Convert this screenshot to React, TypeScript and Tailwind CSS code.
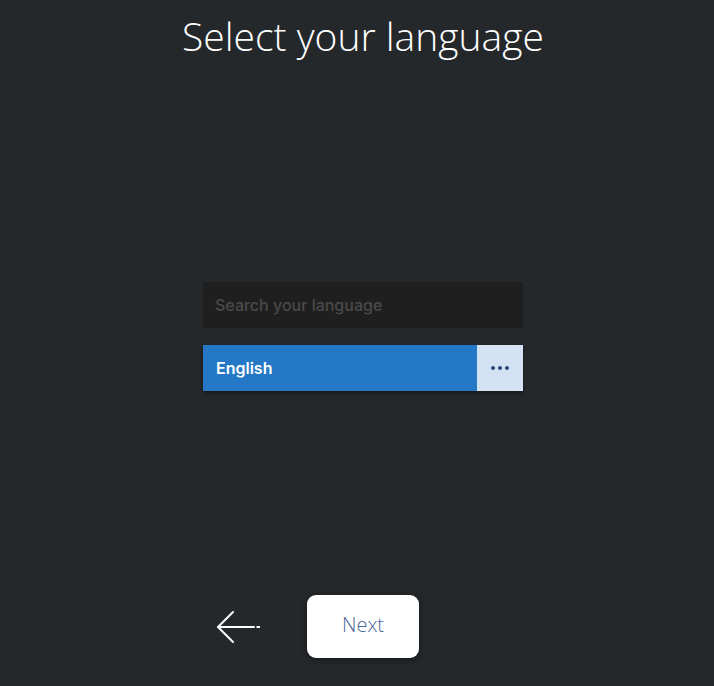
import React from "react";

const ArrowLeft = () => (
  <svg width="48" height="34" viewBox="0 0 48 34" fill="none" className="block">
    <path d="M17 2 L2 17 L17 32" stroke="#ffffff" strokeWidth="2" strokeLinecap="round" strokeLinejoin="round" />
    <path d="M2 17 H38" stroke="#ffffff" strokeWidth="2" strokeLinecap="round" />
    <path d="M40.5 17 H44" stroke="#ffffff" strokeWidth="2" />
  </svg>
);

const App = () => {
  return (
    <div className="flex h-[686px] w-full flex-col items-center bg-[#25282b] pl-[12px] font-['Inter',Arial,sans-serif]">
      <h1 className="mt-[10px] font-['Open_Sans',sans-serif] text-[39px] leading-[52px] font-light text-white">
        Select your language
      </h1>

      <div className="mt-[220px] flex w-[320px] flex-col">
        <input
          type="text"
          placeholder="Search your language"
          className="h-[46px] w-full bg-[#1f1f1f] px-[12px] text-[16px] font-medium text-white outline-none placeholder:text-[#4a4a4a]"
        />
        <div className="mt-[17px] flex h-[46px] items-stretch shadow-[0_2px_4px_rgba(0,0,0,0.4)]">
          <div className="flex flex-1 items-center bg-[#2478c6] px-[13px] text-[16px] font-semibold text-white">
            English
          </div>
          <button className="flex w-[46px] items-center justify-center gap-[3px] bg-[#d3e3f3]">
            <span className="h-[4px] w-[4px] rounded-full bg-[#2a4877]" />
            <span className="h-[4px] w-[4px] rounded-full bg-[#2a4877]" />
            <span className="h-[4px] w-[4px] rounded-full bg-[#2a4877]" />
          </button>
        </div>
      </div>

      <div className="mt-auto mb-[28px] flex w-[320px] items-center">
        <button className="ml-[13px] flex items-center">
          <ArrowLeft />
        </button>
        <button className="ml-[43px] flex h-[63px] w-[112px] items-center justify-center rounded-[9px] bg-white pb-[3px] font-['Open_Sans',sans-serif] text-[20px] font-light text-[#4a6699] shadow-[0_2px_6px_rgba(0,0,0,0.4)]">
          Next
        </button>
      </div>
    </div>
  );
};

export default App;
